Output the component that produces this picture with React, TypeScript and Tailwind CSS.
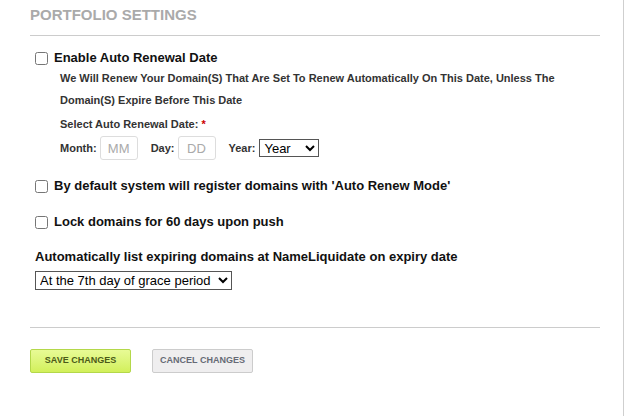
import { useState } from "react";

const font = { fontFamily: '"Liberation Sans", Arial, sans-serif' };

function CheckRow({ label }: { label: string }) {
  const [on, setOn] = useState(false);
  return (
    <label className="flex items-center gap-[6px] pl-[5px]">
      <input
        type="checkbox"
        checked={on}
        onChange={() => setOn(!on)}
        className="m-0 h-[13px] w-[13px]"
      />
      <span className="text-[13px] font-bold leading-[16px] text-[#111]">{label}</span>
    </label>
  );
}

export default function App() {
  return (
    <div style={font} className="min-h-[416px] w-[624px] border-r border-[#cfcfcf] bg-white">
      <div className="ml-[30px] w-[570px]">
        <h2 className="pt-[6px] text-[15px] font-bold uppercase leading-[18px] text-[#aaaaaa]">
          Portfolio Settings
        </h2>
        <div className="mt-[11px] border-t border-[#cccccc]" />

        <div className="mt-[14px]">
          <CheckRow label="Enable Auto Renewal Date" />
          <div className="pl-[30px] text-[11px] font-bold text-[#333]">
            <p className="mt-[1px] leading-[22px]">
              We Will Renew Your Domain(S) That Are Set To Renew Automatically On This Date, Unless The
              Domain(S) Expire Before This Date
            </p>
            <p className="mt-[2px] leading-[22px]">
              Select Auto Renewal Date: <span className="text-[#c00]">*</span>
            </p>
            <div className="mt-[1px] flex items-center">
              <span>Month:</span>
              <input
                placeholder="MM"
                className="ml-[3px] h-[24px] w-[38px] rounded-[3px] border border-[#ddd] text-center text-[13px] font-normal placeholder:text-[#aaa]"
              />
              <span className="ml-[13px]">Day:</span>
              <input
                placeholder="DD"
                className="ml-[3px] h-[24px] w-[38px] rounded-[3px] border border-[#ddd] text-center text-[13px] font-normal placeholder:text-[#aaa]"
              />
              <span className="ml-[13px]">Year:</span>
              <select className="ml-[4px] h-[18px] w-[60px] border border-[#555] text-[13px] font-normal text-black">
                <option>Year</option>
                <option>2025</option>
                <option>2026</option>
              </select>
            </div>
          </div>
        </div>

        <div className="mt-[18px]">
          <CheckRow label="By default system will register domains with 'Auto Renew Mode'" />
        </div>
        <div className="mt-[20px]">
          <CheckRow label="Lock domains for 60 days upon push" />
        </div>

        <div className="mt-[19px] pl-[5px]">
          <p className="text-[13px] font-bold leading-[16px] text-[#111]">
            Automatically list expiring domains at NameLiquidate on expiry date
          </p>
          <select className="mt-[6px] h-[19px] w-[197px] border border-[#555] text-[13px] text-black">
            <option>At the 7th day of grace period</option>
            <option>On expiry date</option>
            <option>Never</option>
          </select>
        </div>

        <div className="mt-[35px] border-t border-[#cccccc]" />

        <div className="mt-[21px] flex gap-[21px]">
          <button className="h-[24px] w-[101px] rounded-[2px] border border-[#b4d84a] bg-gradient-to-b from-[#e8fb95] to-[#d2f05a] text-[9px] font-bold uppercase text-[#4b5a18]">
            Save Changes
          </button>
          <button className="h-[24px] w-[101px] rounded-[2px] border border-[#cccccc] bg-[#efeeef] text-[9px] font-bold uppercase text-[#666a75]">
            Cancel Changes
          </button>
        </div>
      </div>
    </div>
  );
}
